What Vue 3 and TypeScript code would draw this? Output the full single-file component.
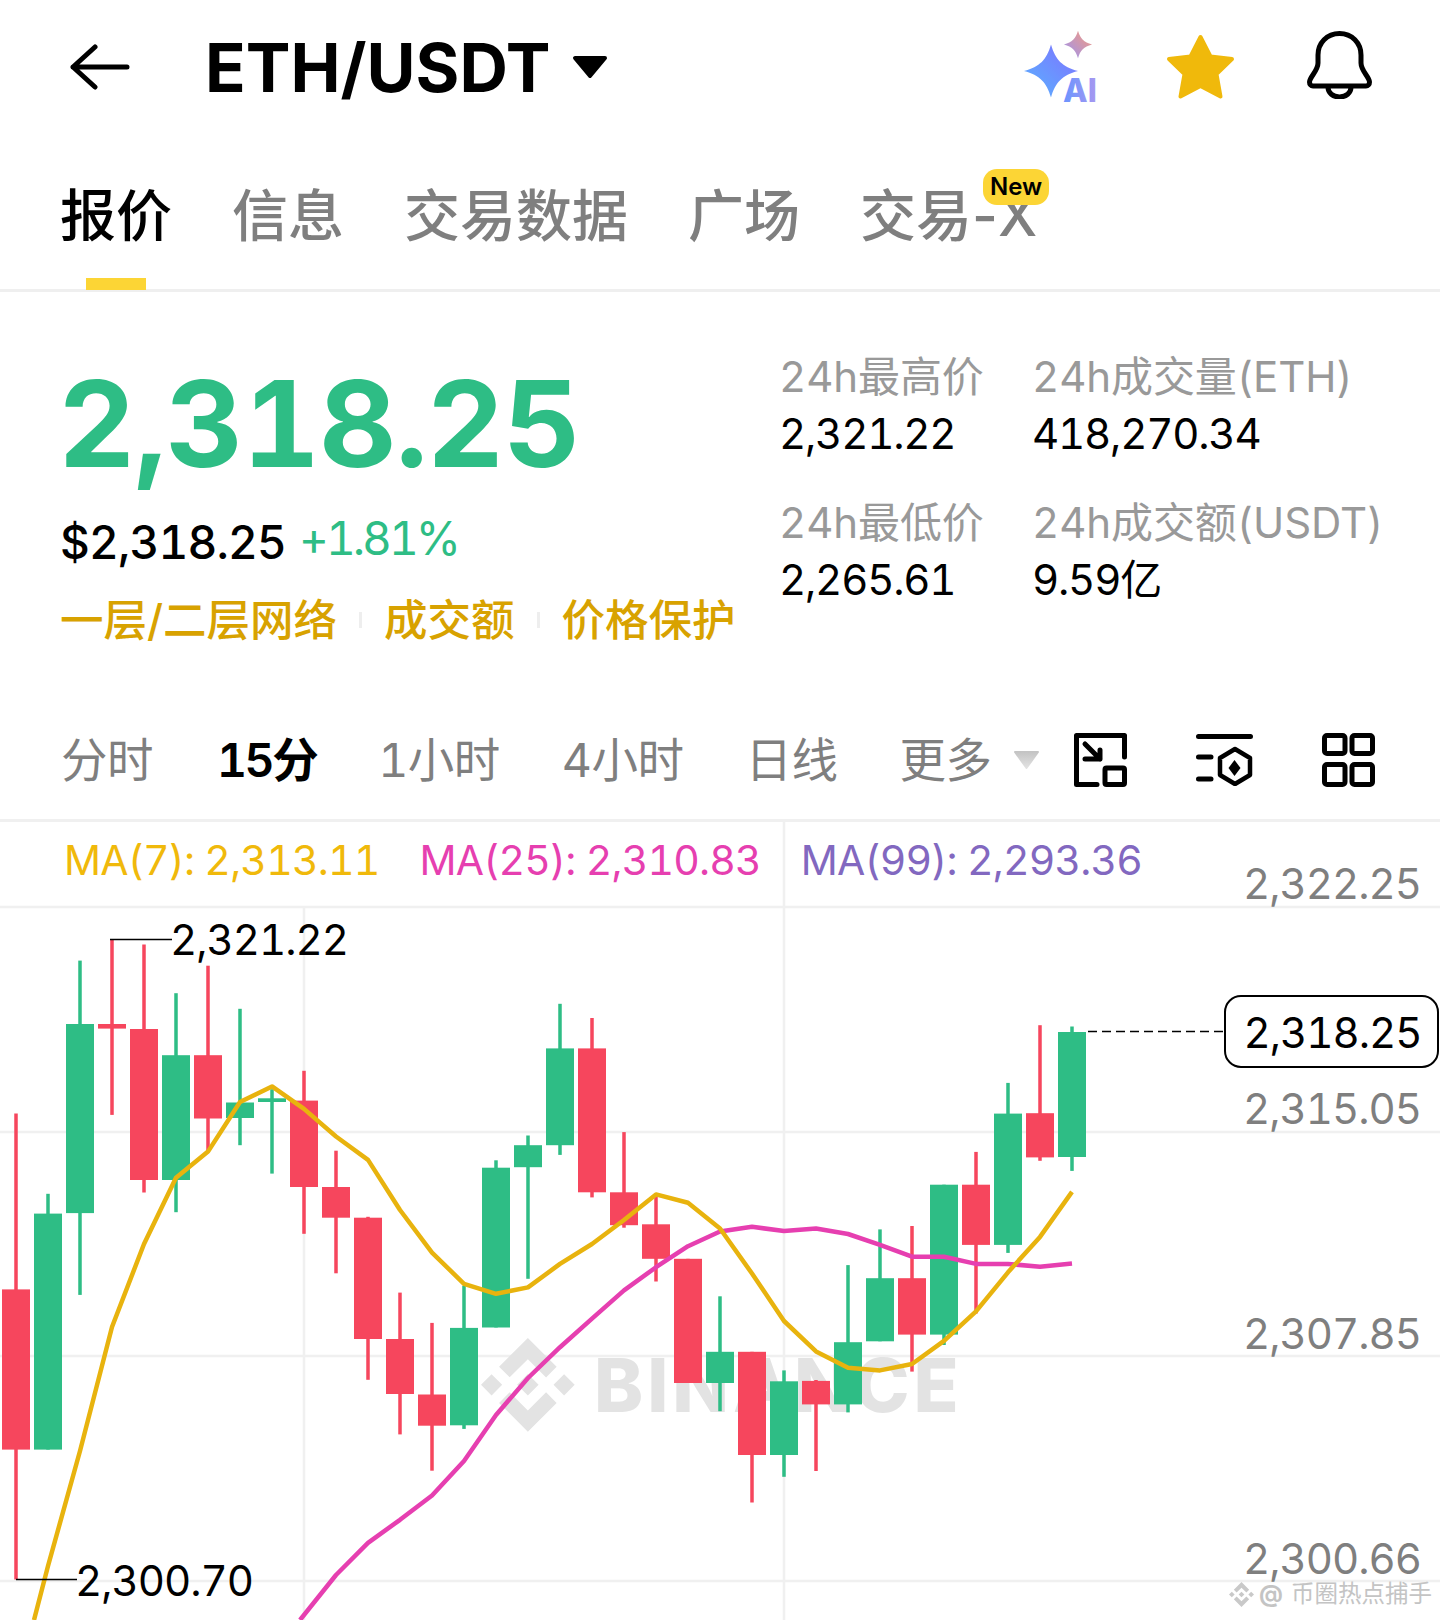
<script setup lang="ts">
interface Candle {
  up: boolean;
  hi: number;
  top: number;
  bot: number;
  lo: number;
}

const tabs = ["报价", "信息", "交易数据", "广场", "交易-X"];
const intervals = ["分时", "15分", "1小时", "4小时", "日线", "更多"];

const candles: Candle[] = [
  [0, 1113.5, 1289.4, 1449.6, 1579.5],
  [1, 1193.8, 1213.6, 1449.6, 1449.6],
  [1, 960.6, 1024, 1213.1, 1294.9],
  [0, 939, 1024, 1028.6, 1114.9],
  [0, 944.5, 1029, 1180, 1192.5],
  [1, 993.2, 1055.2, 1180, 1212.2],
  [0, 965.7, 1055.2, 1118.5, 1151.6],
  [1, 1008.8, 1102.5, 1118, 1145.2],
  [1, 1089.2, 1098.3, 1102, 1173.6],
  [0, 1070.8, 1100.6, 1187, 1233.8],
  [0, 1150.7, 1187, 1217.7, 1273.3],
  [0, 1216.8, 1217.7, 1339, 1379.8],
  [0, 1292.6, 1339, 1394, 1434.4],
  [0, 1322.9, 1394.5, 1425.7, 1470.7],
  [1, 1285.7, 1327.9, 1425.3, 1428.9],
  [1, 1160.3, 1167.7, 1327.5, 1327.5],
  [1, 1135.5, 1145.2, 1167.2, 1278.8],
  [1, 1003.8, 1048.4, 1145.2, 1154.9],
  [0, 1018, 1048.4, 1192.3, 1197.4],
  [0, 1132.1, 1192.3, 1225.2, 1227.7],
  [0, 1195.7, 1224.3, 1258.8, 1281.5],
  [0, 1258.8, 1258.8, 1383, 1383],
  [1, 1296.3, 1351.8, 1383, 1411.2],
  [0, 1351.8, 1351.8, 1455, 1502.5],
  [1, 1370.4, 1381.3, 1455, 1476.8],
  [0, 1380, 1380.9, 1404.4, 1471],
  [1, 1265.1, 1342.2, 1404.4, 1412.4],
  [1, 1229.4, 1278.2, 1341.3, 1341.3],
  [0, 1226, 1278.2, 1334.6, 1371.6],
  [1, 1184.7, 1184.7, 1334.6, 1345],
  [0, 1151.9, 1184.7, 1244.9, 1313.5],
  [1, 1082.9, 1113.6, 1244.9, 1252.9],
  [0, 1025.2, 1113.2, 1157.4, 1160.8],
  [1, 1026.5, 1032, 1157, 1170.9],
].map(([up, hi, top, bot, lo]) => ({ up: up === 1, hi, top, bot, lo }));

const ma7 = [
  1451, 1327, 1244, 1177.8, 1151.6, 1102, 1086.4, 1108.9, 1136.5, 1159.9, 1210, 1252.6, 1283.8,
  1293.8, 1287.4, 1263.9, 1244, 1220, 1194.4, 1202.8, 1228.5, 1273.5, 1321, 1351.4, 1367.8, 1370.4,
  1364, 1340.9, 1311.4, 1272.3, 1236.9, 1191.9,
];
const ma25 = [
  1575, 1542.8, 1519.8, 1495.5, 1461, 1415, 1378, 1347.2, 1318.6, 1290.4, 1267.2, 1246.2, 1231.5,
  1226.8, 1231, 1228.5, 1234, 1244.9, 1256.7, 1256.7, 1263.9, 1263.9, 1266.8, 1263.5,
];

const cx = (i: number) => 16 + 32 * i;
const ma7Points = "34,1620 48,1566 " + ma7.map((y, i) => `${cx(i + 2)},${y}`).join(" ");
const ma25Points = "300,1620 " + ma25.map((y, i) => `${cx(i + 10)},${y}`).join(" ");

const gridLines = [907, 1132, 1356, 1581];
const axisLabels = [
  { y: 884, text: "2,322.25" },
  { y: 1109, text: "2,315.05" },
  { y: 1334, text: "2,307.85" },
  { y: 1559, text: "2,300.66" },
];
const logo =
  "M38.73 53.2l24.59-24.58 24.6 24.6 14.3-14.31L63.32 0 24.42 38.9zM0 63.31l14.3-14.31 14.31 14.31-14.31 14.3zM38.73 73.41l24.59 24.59 24.6-24.6 14.31 14.29-38.9 38.91-38.91-38.88v-.03zM98 63.31l14.3-14.31 14.31 14.3-14.31 14.32zM77.83 63.3L63.32 48.78 52.59 59.51l-1.24 1.23-2.54 2.54 14.51 14.5 14.51-14.47z";
const sparkle = "M0 -26.5C4.5 -11 11 -4.5 27 0C11 4.5 4.5 11 0 26.5C-4.5 11 -11 4.5 -27 0C-11 -4.5 -4.5 -11 0 -26.5Z";
</script>

<template>
  <div class="page">
    <header class="top">
      <svg class="back" width="60" height="46" viewBox="0 0 60 46" fill="none" stroke="#000" stroke-width="5" stroke-linecap="round" stroke-linejoin="round">
        <path d="M25 3L3 23L25 43M3 23H57" />
      </svg>
      <h1 class="pair">ETH/USDT</h1>
      <svg class="caret" width="36" height="24" viewBox="0 0 36 24">
        <path d="M3 3H33L18 21Z" fill="#000" stroke="#000" stroke-width="4" stroke-linejoin="round" />
      </svg>
      <div class="top-icons">
        <svg class="ai" width="76" height="84" viewBox="0 0 76 84">
          <defs>
            <linearGradient id="big" x1="0" y1="1" x2="1" y2="0">
              <stop offset="0" stop-color="#58B4FF" />
              <stop offset="1" stop-color="#8070FF" />
            </linearGradient>
            <linearGradient id="small" x1="0" y1="1" x2="1" y2="0">
              <stop offset="0" stop-color="#9A94F5" />
              <stop offset="1" stop-color="#F79A7C" />
            </linearGradient>
            <linearGradient id="aitext" x1="0" y1="0" x2="1" y2="0">
              <stop offset="0" stop-color="#6A94FF" />
              <stop offset="1" stop-color="#A798F0" />
            </linearGradient>
          </defs>
          <path :d="sparkle" transform="translate(27 40)" fill="url(#big)" />
          <path :d="sparkle" transform="translate(54 13.5) scale(.52)" fill="url(#small)" />
          <text x="39" y="70.5" class="ai-text" fill="url(#aitext)">AI</text>
        </svg>
        <svg class="star" width="69" height="66" viewBox="0 0 69 66">
          <path d="M34.5 3L44.5 22.5L66 25L50.5 40L54.5 62.5L34.5 52L14.5 62.5L18.5 40L3 25L24.5 22.5Z" fill="#F0B90B" stroke="#F0B90B" stroke-width="4" stroke-linejoin="round" />
        </svg>
        <svg class="bell" width="65" height="68" viewBox="0 0 65 68" fill="none" stroke="#000" stroke-width="5" stroke-linejoin="round">
          <path d="M32.5 2.5C20 2.5 11 12 11 24V32C11 40 2.5 46 2.5 51C2.5 53.5 4 55 6 55H59C61 55 62.5 53.5 62.5 51C62.5 46 54 40 54 32V24C54 12 45 2.5 32.5 2.5Z" />
          <path d="M21 56C21 62 26 66 32.5 66C39 66 44 62 44 56" />
        </svg>
      </div>
    </header>

    <nav class="tabs">
      <div v-for="(tab, i) in tabs" :key="tab" class="tab" :class="{ active: i === 0 }">
        {{ tab }}
        <span v-if="i === 4" class="badge">New</span>
      </div>
    </nav>

    <section class="summary">
      <div class="quote">
        <div class="price">2,318.25</div>
        <div class="fiat">
          <span class="usd">$2,318.25</span>
          <span class="change">+1.81%</span>
        </div>
        <div class="tags">
          <span>一层/二层网络</span>
          <i></i>
          <span>成交额</span>
          <i></i>
          <span>价格保护</span>
        </div>
      </div>
      <div class="stats">
        <div class="stat">
          <span class="label">24h最高价</span>
          <span class="value">2,321.22</span>
        </div>
        <div class="stat">
          <span class="label">24h成交量(ETH)</span>
          <span class="value">418,270.34</span>
        </div>
        <div class="stat">
          <span class="label">24h最低价</span>
          <span class="value">2,265.61</span>
        </div>
        <div class="stat">
          <span class="label">24h成交额(USDT)</span>
          <span class="value">9.59亿</span>
        </div>
      </div>
    </section>

    <div class="intervals">
      <span v-for="(item, i) in intervals" :key="item" class="interval" :class="{ active: i === 1 }">{{ item }}</span>
      <svg class="more" width="27" height="18" viewBox="0 0 27 18">
        <defs>
          <linearGradient id="more" x1="0" y1="0" x2="0" y2="1">
            <stop offset="0" stop-color="#C4C4C4" />
            <stop offset="1" stop-color="#E2E2E2" />
          </linearGradient>
        </defs>
        <path d="M2 1H25L13.5 17Z" fill="url(#more)" stroke="url(#more)" stroke-width="2" stroke-linejoin="round" />
      </svg>
      <div class="tools">
        <svg width="53" height="54" viewBox="0 0 53 54" fill="none" stroke="#000" stroke-width="5" stroke-linecap="round" stroke-linejoin="round">
          <path d="M50.5 24V2.5H2.5V51.5H23" />
          <rect x="31" y="35" width="19.5" height="16.5" rx="1.5" />
          <path d="M11 11L26 26M11 26H26V17" />
        </svg>
        <svg width="57" height="52" viewBox="0 0 57 52" fill="none" stroke="#000" stroke-width="5" stroke-linecap="round" stroke-linejoin="round">
          <path d="M2.5 2.5H54.5M2.5 23H15M2.5 45H15" />
          <path d="M39 15L54 24V41L39 50L24 41V24Z" stroke-width="4.5" />
          <path d="M38.5 26L44.5 34L38.5 42L32.5 34Z" fill="#000" stroke="none" />
        </svg>
        <svg width="53" height="54" viewBox="0 0 53 54" fill="none" stroke="#000" stroke-width="5" stroke-linejoin="round">
          <rect x="2.5" y="2.5" width="20.5" height="18" rx="2.5" />
          <rect x="30" y="2.5" width="20.5" height="18" rx="2.5" />
          <rect x="2.5" y="31.5" width="20.5" height="20" rx="2.5" />
          <rect x="30" y="31.5" width="20.5" height="20" rx="2.5" />
        </svg>
      </div>
    </div>

    <section class="chart">
      <svg class="plot" width="1440" height="798" viewBox="0 822 1440 798">
        <line v-for="y in gridLines" :key="y" x1="0" x2="1440" :y1="y" :y2="y" class="grid" />
        <line x1="304" x2="304" y1="907" y2="1620" class="grid" />
        <line x1="784" x2="784" y1="822" y2="1620" class="grid" />

        <g fill="#E3E3E3">
          <path :d="logo" transform="translate(481 1338) scale(.74)" />
          <text x="594" y="1412" class="mark">BINANCE</text>
        </g>

        <g v-for="(c, i) in candles" :key="i" :fill="c.up ? '#2EBD85' : '#F6465D'">
          <rect :x="cx(i) - 1.75" :y="c.hi" width="3.5" :height="c.lo - c.hi" />
          <rect :x="cx(i) - 14" :y="c.top" width="28" :height="c.bot - c.top" />
        </g>

        <polyline :points="ma25Points" class="ma" stroke="#E63FB0" />
        <polyline :points="ma7Points" class="ma" stroke="#E8B30E" />

        <path d="M110 939.5H172M16 1579.5H77" stroke="#000" stroke-width="1.5" fill="none" />
        <line x1="1088" x2="1224" y1="1031.5" y2="1031.5" stroke="#000" stroke-width="1.5" stroke-dasharray="9 5" />
        <text x="170" y="955" class="mark-price">2,321.22</text>
        <text x="75" y="1596" class="mark-price">2,300.70</text>
        <text v-for="l in axisLabels" :key="l.y" x="1421" :y="l.y + 15" class="axis">{{ l.text }}</text>
      </svg>

      <div class="legend">
        <span class="ma7">MA(7): 2,313.11</span>
        <span class="ma25">MA(25): 2,310.83</span>
        <span class="ma99">MA(99): 2,293.36</span>
      </div>
      <div class="last-price">2,318.25</div>
      <div class="credit">
        <svg width="27" height="25" viewBox="0 0 126.61 126.61" fill="#C9C9C9"><path :d="logo" /></svg>
        <span class="at">@</span>
        <span>币圈热点捕手</span>
      </div>
    </section>
  </div>
</template>

<style>
html,
body {
  margin: 0;
  background: #fff;
}
</style>

<style scoped>
.page {
  width: 1440px;
  height: 1620px;
  overflow: hidden;
  background: #fff;
  color: #000;
  font-family: Inter, "Noto Sans CJK SC", sans-serif;
  font-variant-numeric: tabular-nums;
}

.top {
  display: flex;
  align-items: center;
  height: 134px;
  padding: 0 68px 0 70px;
  box-sizing: border-box;
}

.pair {
  margin: 0 0 0 75px;
  font-size: 67px;
  font-weight: 700;
  line-height: 1;
}

.caret {
  margin-left: 22px;
}

.top-icons {
  display: flex;
  align-items: center;
  margin-left: auto;
}

.ai {
  margin-top: 12px;
}

.ai-text {
  font-size: 32px;
  font-weight: 800;
}

.star {
  margin-left: 66px;
}

.bell {
  margin: -4px 0 0 72px;
}

.tabs {
  display: flex;
  gap: 60px;
  height: 158px;
  padding: 52px 0 0 60px;
  box-sizing: border-box;
  border-bottom: 3px solid #efefef;
  font-size: 56px;
  font-variant-numeric: normal;
  line-height: 60px;
  color: #7f7f7f;
}

.tab {
  position: relative;
  height: 60px;
  font-weight: 500;
}

.tab.active {
  color: #000;
}

.tab.active::after {
  content: "";
  position: absolute;
  left: 26px;
  top: 92px;
  width: 60px;
  height: 12px;
  background: #fcd535;
}

.badge {
  position: absolute;
  right: -12px;
  top: -17px;
  width: 66px;
  height: 36px;
  border-radius: 14px;
  background: #fcd535;
  color: #000;
  font-size: 24px;
  font-weight: 600;
  line-height: 36px;
  text-align: center;
}

.summary {
  display: flex;
  height: 408px;
  padding-left: 60px;
  box-sizing: border-box;
}

.quote {
  width: 719px;
  padding-top: 72px;
}

.price {
  margin-left: -2px;
  color: #2ebd85;
  font-size: 120px;
  font-weight: 700;
  letter-spacing: -1px;
  line-height: 120px;
}

.fiat {
  display: flex;
  gap: 13px;
  margin-top: 28px;
  font-size: 46px;
  line-height: 60px;
}

.usd {
  font-weight: 500;
  letter-spacing: -0.8px;
}

.change {
  position: relative;
  top: -4px;
  color: #2ebd85;
  letter-spacing: -3px;
}

.tags {
  display: flex;
  align-items: center;
  margin-top: 18px;
  color: #d8a200;
  font-size: 43.5px;
  font-weight: 500;
  line-height: 60px;
}

.tags i {
  width: 3px;
  height: 16px;
  margin: 0 22px;
  background: #eeeeee;
}

.stats {
  display: grid;
  grid-template-columns: 253px auto;
  align-content: start;
  row-gap: 39px;
  padding-top: 60px;
}

.stat {
  display: flex;
  flex-direction: column;
  gap: 7px;
  font-size: 42px;
  line-height: 50px;
}

.label {
  color: #999;
  letter-spacing: -0.1px;
  white-space: nowrap;
}

.value {
  letter-spacing: -1.2px;
}

.intervals {
  display: flex;
  align-items: center;
  gap: 62px;
  height: 122px;
  padding: 0 0 6px 61px;
  box-sizing: border-box;
  border-bottom: 3px solid #f0f0f0;
  color: #7f7f7f;
  font-size: 46.5px;
  letter-spacing: -0.5px;
  white-space: nowrap;
}

.interval.active {
  margin-left: 2px;
  color: #000;
  font-weight: 600;
  letter-spacing: -2.5px;
}

.more {
  flex-shrink: 0;
  margin: 6px 0 0 -40px;
}

.tools {
  display: flex;
  flex-shrink: 0;
  align-items: center;
  gap: 69px;
  margin: 6px 0 0 -28px;
}

.chart {
  position: relative;
  height: 798px;
}

.plot {
  display: block;
}

.grid {
  stroke: #f0f0f0;
  stroke-width: 2.5;
}

.mark {
  font-size: 74px;
  font-weight: 800;
  letter-spacing: 4px;
}

.ma {
  fill: none;
  stroke-width: 4.5;
  stroke-linejoin: round;
}

.mark-price {
  font-size: 42px;
  letter-spacing: -1px;
  fill: #000;
}

.axis {
  font-size: 42px;
  letter-spacing: -1px;
  fill: #7f7f7f;
  text-anchor: end;
}

.legend {
  position: absolute;
  left: 64px;
  top: 13px;
  display: flex;
  gap: 40px;
  font-size: 41px;
  letter-spacing: -0.8px;
  line-height: 50px;
}

.ma7 {
  color: #f0b90b;
}

.ma25 {
  color: #e63fb0;
}

.ma99 {
  color: #8268c0;
}

.last-price {
  position: absolute;
  left: 1224px;
  top: 173px;
  box-sizing: border-box;
  width: 215px;
  height: 73px;
  padding-left: 2px;
  border: 2px solid #000;
  border-radius: 17px;
  font-size: 42px;
  letter-spacing: -1px;
  line-height: 71px;
  text-align: center;
}

.credit {
  position: absolute;
  left: 1228px;
  top: 759px;
  display: flex;
  align-items: center;
  gap: 4px;
  color: #c4c4c4;
  font-size: 23.5px;
  line-height: 26px;
  white-space: nowrap;
}

.at {
  font-weight: 700;
  margin-right: 4px;
}
</style>
